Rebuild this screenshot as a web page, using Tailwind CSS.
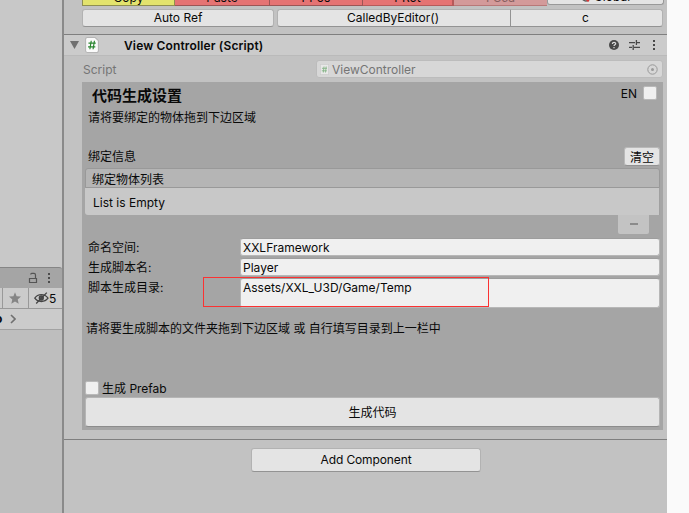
<!DOCTYPE html>
<html lang="zh-CN">
<head>
<meta charset="utf-8">
<title>Inspector</title>
<script src="https://cdn.jsdelivr.net/npm/@tailwindcss/browser@4"></script>
</head>
<body class="w-[689px] h-[513px] overflow-hidden flex bg-[#fafafa] font-['Inter','Noto_Sans_CJK_SC',sans-serif] text-[12px] leading-[16px] text-[#090909] whitespace-nowrap">
<!-- Project window edge -->
<aside class="w-[62px] h-full shrink-0 flex flex-col bg-[#c2c2c2] overflow-hidden">
  <div class="h-[267px] shrink-0 bg-[#c8c8c8]"></div>
  <div class="h-[21px] shrink-0 bg-[#a5a5a5] border-t border-[#858585] rounded-tr-[3px] flex items-center pl-[28px] gap-[10px]">
    <svg class="w-[10px] h-[12px]" viewBox="0 0 10 12" fill="none" stroke="#555" stroke-width="1.2"><path d="M1.5 6.5h7v4h-7zM2.8 2.5V2.2Q3 1.4 4 1.4h2q1.5 0 1.5 1.5v3.6"/></svg>
    <svg class="-ml-[4px] w-[10px] h-[12px]" viewBox="0 0 10 12" fill="#4c4c4c"><path d="M4 1h2v2H4zM4 5h2v2H4zM4 9h2v2H4z"/></svg>
  </div>
  <div class="h-[21px] shrink-0 bg-[#cbcbcb] border-b border-[#999] flex">
    <div class="w-[3px] border-r border-[#999]"></div>
    <div class="w-[26px] border-r border-[#999] flex items-center justify-center pr-[2px]">
      <svg class="w-[12px] h-[12px]" viewBox="0 0 12 12" fill="#858585"><path d="M6 .2 7.6 4.2 12 4.6 8.7 7.4 9.7 11.8 6 9.4 2.3 11.8 3.3 7.4 0 4.6 4.4 4.2z"/></svg>
    </div>
    <div class="flex items-center pl-[5px]">
      <svg class="w-[15px] h-[12px]" viewBox="0 0 15 12" fill="none" stroke="#444" stroke-width="1.3"><path d="M.8 6.2C3.8 1.5 10.8 1.5 14 6.2 10.8 10.6 3.8 10.6.8 6.2z"/><circle cx="7.3" cy="6" r="2" fill="#555"/><path d="M2.2 11.5 12.8.6"/></svg>
      <span class="pt-[2px]">5</span>
    </div>
  </div>
  <div class="h-[21px] shrink-0 bg-[#cbcbcb] border-b border-[#a2a2a2] flex items-center">
    <span class="font-bold w-[9px] -ml-[5px]">o</span>
    <svg class="ml-[6px] w-[6px] h-[10px]" viewBox="0 0 6 10" fill="none" stroke="#707070" stroke-width="1.6"><path d="M1 1l4 4-4 4"/></svg>
  </div>
  <div class="flex-1 bg-[#bebebe]"></div>
</aside>
<div class="w-[2px] shrink-0 bg-[#8a8a8a]"></div>

<!-- Inspector -->
<main class="w-[603px] shrink-0 h-full bg-[#c2c2c2] flex flex-col overflow-hidden">
  <div class="h-[9px] shrink-0 pl-[18px] flex items-start">
    <div class="w-[93px] h-[6px] bg-[#e3e36d] border border-t-0 border-[#8f8f50] flex items-end justify-center overflow-hidden"><span class="leading-[12px] relative -top-px h-[12px]">Copy</span></div>
    <div class="w-[95px] h-[6px] bg-[#e57373] border-b border-r border-[#9c5555] flex items-end justify-center overflow-hidden"><span class="leading-[12px] relative -top-px h-[12px]">Paste</span></div>
    <div class="w-[93px] h-[6px] bg-[#e57373] border-b border-r border-[#9c5555] flex items-end justify-center overflow-hidden"><span class="leading-[12px] relative -top-px h-[12px]">PPos</span></div>
    <div class="w-[91px] h-[6px] bg-[#e57373] border-b border-r-2 border-[#b65a5a] flex items-end justify-center overflow-hidden"><span class="leading-[12px] relative -top-px h-[12px]">PRot</span></div>
    <div class="w-[93px] h-[6px] bg-[#d39a9a] border-b border-[#b87878] text-[#865f5f] flex items-end justify-center overflow-hidden"><span class="leading-[12px] relative -top-px h-[12px]">PSca</span></div>
    <div class="w-[117px] h-[5px] bg-[#e4e4e4] border border-t-0 border-[#999] rounded-b-[3px] flex items-end justify-center gap-[3px] overflow-hidden">
      <svg class="w-[10px] h-[10px] relative top-[-2px] shrink-0" viewBox="0 0 10 10" fill="none"><circle cx="5" cy="5" r="4" stroke="#555" stroke-width="1.5"/><path d="M4 6l3 3 2-4" stroke="#d33" stroke-width="1.5"/></svg>
      <span class="leading-[12px] relative -top-px h-[12px]">Global</span>
    </div>
  </div>
  <div class="h-[25px] shrink-0 pl-[18px] flex items-start">
    <div class="w-[192px] h-[18px] bg-[#e4e4e4] border border-[#b2b2b2] border-b-[#939393] rounded-[3px] text-center leading-[16px]">Auto Ref</div>
    <div class="ml-[3px] w-[234px] h-[18px] bg-[#e4e4e4] border border-[#b2b2b2] border-b-[#939393] border-r-[#939393] rounded-l-[3px] text-center leading-[16px] pr-[2px]">CalledByEditor()</div>
    <div class="w-[152px] h-[18px] bg-[#e4e4e4] border border-l-0 border-[#b2b2b2] border-b-[#939393] rounded-r-[3px] text-center leading-[16px] pr-[2px]">c</div>
  </div>
  <header class="h-[22px] shrink-0 border-t border-t-[#7f7f7f] border-b border-b-[#bababa] bg-[#cbcbcb] flex items-center pl-[6px]">
    <svg class="w-[9px] h-[8px]" viewBox="0 0 9 8" fill="#707070"><path d="M0 0h9L4.5 8z"/></svg>
    <svg class="ml-[6px] w-[14px] h-[16px]" viewBox="0 0 13 15" fill="none"><path d="M2 .5h7.5l3 3v9.5a1.5 1.5 0 0 1-1.5 1.5H2A1.5 1.5 0 0 1 .5 13V2A1.5 1.5 0 0 1 2 .5z" fill="#fafafa" stroke="#b5b5b5"/><path d="M5.8 3.5 4.5 11.5M8.8 3.5 7.5 11.5M3.2 5.8h6.8M2.8 9.2h6.8" stroke="#28852e" stroke-width="1.1"/></svg>
    <span class="ml-[25px] pt-[2px] w-[485px] font-semibold text-[12px] tracking-[0.14px]">View Controller (Script)</span>
    <svg class="w-[10px] h-[10px]" viewBox="0 0 10 10"><circle cx="5" cy="5" r="5" fill="#484848"/><path d="M3.4 3.9c0-2.2 3.3-2 3.3-.2C6.7 4.8 5 4.8 5 6.1M5 7.1v1.2" fill="none" stroke="#ddd" stroke-width="1.2"/></svg>
    <svg class="ml-[10px] w-[11px] h-[10px]" viewBox="0 0 11 10" fill="none" stroke="#484848" stroke-width="1.3"><path d="M0 2.6h6M8 2.6h3M7.4 0v5M0 7.4h3M5 7.4h6M4.2 5v5"/></svg>
    <svg class="ml-[12px] w-[4px] h-[12px]" viewBox="0 0 4 12" fill="#484848"><path d="M1 1h2v2H1zM1 5h2v2H1zM1 9h2v2H1z"/></svg>
  </header>
  <div class="h-[26px] shrink-0 pl-[19px] pt-[4px] flex items-start text-[#757575]">
    <span class="w-[233px] pt-[2px]">Script</span>
    <div class="w-[347px] h-[18px] bg-[#d7d7d7] border border-[#bcbcbc] rounded-[3px] flex items-center pl-[3px] pr-[4px]">
      <svg class="w-[9px] h-[11px]" viewBox="0 0 9 11"><rect x=".3" y=".3" width="8.4" height="10.4" rx="1" fill="#e8e8e8" stroke="#c0c0c0" stroke-width=".6"/><path d="M4 2.5 3.3 8.5M6.2 2.5 5.5 8.5M2 4.3h5M1.8 6.8h5" fill="none" stroke="#84b486" stroke-width=".9"/></svg>
      <span class="ml-[3px] pt-[2px] flex-1">ViewController</span>
      <svg class="w-[11px] h-[11px]" viewBox="0 0 11 11"><circle cx="5.5" cy="5.5" r="4.7" fill="none" stroke="#999"/><circle cx="5.5" cy="5.5" r="1.5" fill="#999"/></svg>
    </div>
  </div>

  <section class="ml-[18px] w-[581px] h-[348px] shrink-0 bg-[#a5a5a5] pl-[3px] pr-[3px] flex flex-col">
    <div class="h-[25px] shrink-0 flex pl-[7px] pr-[3px]">
      <h1 class="text-[15px] font-bold leading-[27px] flex-1">代码生成设置</h1>
      <span class="leading-[23px]">EN</span>
      <span class="ml-[6px] mt-[4px] w-[14px] h-[14px] bg-[#f0f0f0] border border-[#b9b9b9] rounded-[2px]"></span>
    </div>
    <div class="h-[40px] shrink-0 pl-[3px] leading-[22px]">请将要绑定的物体拖到下边区域</div>
    <div class="h-[21px] shrink-0 pl-[3px] flex justify-between leading-[20px]">
      <span>绑定信息</span>
      <span class="w-[36px] h-[19px] bg-[#e4e4e4] border border-[#b9b9b9] border-b-[#929292] rounded-[3px] text-center leading-[19px]">清空</span>
    </div>
    <div class="h-[20px] shrink-0 bg-[#b5b5b5] border border-[#999] rounded-t-[3px] pl-[6px] leading-[21px]">绑定物体列表</div>
    <div class="h-[27px] shrink-0 bg-[#c8c8c8] border-r border-[#a0a0a0] rounded-bl-[3px] pl-[8px] leading-[30px]">List is Empty</div>
    <div class="h-[23px] shrink-0 flex justify-end pr-[11px]">
      <div class="w-[31px] h-[19px] bg-[#c3c3c3] rounded-b-[2px] flex items-center justify-center pb-[2px]"><span class="w-[8px] h-[2px] bg-[#8b8b8b]"></span></div>
    </div>
    <div class="h-[20px] shrink-0 flex pl-[3px]">
      <span class="w-[152px] leading-[20px]">命名空间:</span>
      <span class="w-[420px] h-[18px] bg-[#f0f0f0] border border-[#b7b7b7] border-t-[#9d9d9d] rounded-[3px] pl-[2px] leading-[18px]">XXLFramework</span>
    </div>
    <div class="h-[20px] shrink-0 flex pl-[3px]">
      <span class="w-[152px] leading-[20px]">生成脚本名:</span>
      <span class="w-[420px] h-[18px] bg-[#f0f0f0] border border-[#b7b7b7] border-t-[#9d9d9d] rounded-[3px] pl-[2px] leading-[18px]">Player</span>
    </div>
    <div class="h-[40px] shrink-0 flex pl-[3px] relative">
      <span class="w-[152px] leading-[20px]">脚本生成目录:</span>
      <span class="w-[420px] h-[30px] bg-[#f0f0f0] border border-[#b7b7b7] border-t-[#9d9d9d] rounded-[3px] pl-[2px] leading-[18px]">Assets/XXL_U3D/Game/Temp</span>
      <span class="absolute left-[118px] top-[-1px] w-[286px] h-[30px] border border-[#fb3232]"></span>
    </div>
    <div class="h-[60px] shrink-0 pl-px leading-[22px]">请将要生成脚本的文件夹拖到下边区域 或 自行填写目录到上一栏中</div>
    <div class="h-[19px] shrink-0 flex">
      <span class="mt-[3px] w-[14px] h-[14px] bg-[#f0f0f0] border border-[#b9b9b9] rounded-[2px]"></span>
      <span class="ml-[3px] leading-[21px]">生成 Prefab</span>
    </div>
    <div class="h-[30px] shrink-0 bg-[#e4e4e4] border border-[#b5b5b5] border-b-[#8c8c8c] rounded-[3px] text-center leading-[30px]">生成代码</div>
  </section>
  <div class="mt-[9px] h-px shrink-0 bg-[#7f7f7f]"></div>
  <div class="mt-[8px] ml-[187px] w-[230px] h-[24px] shrink-0 bg-[#e4e4e4] border border-[#b2b2b2] border-b-[#939393] rounded-[3px] text-center leading-[22px] tracking-[-0.12px]">Add Component</div>
</main>
</body>
</html>
